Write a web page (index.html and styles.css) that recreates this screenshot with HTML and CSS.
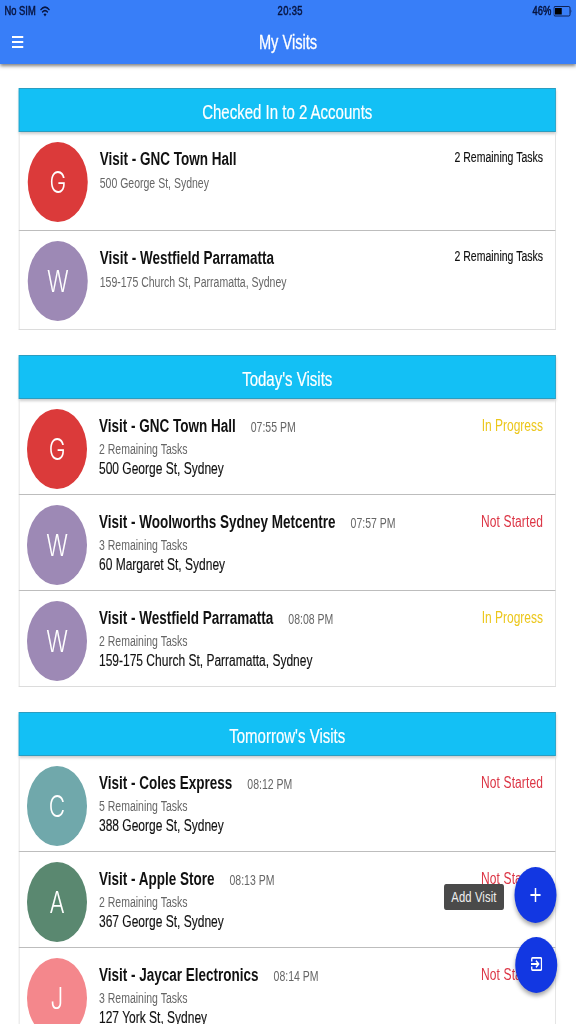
FILE: index.html
```html
<!DOCTYPE html>
<html lang="en">
<head>
    <meta charset="UTF-8">
    <meta name="viewport" content="width=device-width, initial-scale=1.0">
    <title>My Visits</title>
    <link rel="stylesheet" href="styles.css">
</head>
<body>
    <div class="app">
        <header class="top">
            <div class="status-bar">
                <div class="carrier">
                    <span>No SIM</span>
                    <svg width="14" height="11" viewBox="0 0 14 11" fill="none" stroke="#07143f" stroke-width="1.7">
                        <path d="M1 4Q7-1.6 13 4M3.2 6.4Q7 3 10.8 6.4"/>
                        <path d="M7 10.4L5 8.2Q7 6.6 9 8.2Z" fill="#07143f" stroke="none"/>
                    </svg>
                </div>
                <span class="clock">20:35</span>
                <div class="battery">
                    <span>46%</span>
                    <svg width="26" height="11" viewBox="0 0 26 11">
                        <rect x="0.5" y="0.5" width="21.5" height="9.5" rx="1.5" fill="none" stroke="#07143f"/>
                        <rect x="2" y="2" width="9" height="6.5" fill="#000"/>
                        <path d="M23 3.2Q25 5.2 23 7.5Z" fill="#07143f"/>
                    </svg>
                </div>
            </div>
            <div class="nav-bar">
                <button class="menu-button" aria-label="Menu">
                    <span></span>
                    <span></span>
                    <span></span>
                </button>
                <h1>My Visits</h1>
            </div>
        </header>

        <main>
            <!-- Checked in -->
            <section class="card checked-in">
                <h2>Checked In to 2 Accounts</h2>
                <div class="row">
                    <div class="avatar red">G</div>
                    <div class="info">
                        <h3>Visit - GNC Town Hall</h3>
                        <p class="sub">500 George St, Sydney</p>
                    </div>
                    <span class="remaining">2 Remaining Tasks</span>
                </div>
                <div class="row">
                    <div class="avatar purple">W</div>
                    <div class="info">
                        <h3>Visit - Westfield Parramatta</h3>
                        <p class="sub">159-175 Church St, Parramatta, Sydney</p>
                    </div>
                    <span class="remaining">2 Remaining Tasks</span>
                </div>
            </section>

            <!-- Today -->
            <section class="card">
                <h2>Today's Visits</h2>
                <div class="row">
                    <div class="avatar red">G</div>
                    <div class="info">
                        <div class="title"><h3>Visit - GNC Town Hall</h3><span class="time">07:55 PM</span></div>
                        <p class="tasks">2 Remaining Tasks</p>
                        <p class="address">500 George St, Sydney</p>
                    </div>
                    <span class="status in-progress">In Progress</span>
                </div>
                <div class="row">
                    <div class="avatar purple">W</div>
                    <div class="info">
                        <div class="title"><h3>Visit - Woolworths Sydney Metcentre</h3><span class="time">07:57 PM</span></div>
                        <p class="tasks">3 Remaining Tasks</p>
                        <p class="address">60 Margaret St, Sydney</p>
                    </div>
                    <span class="status not-started">Not Started</span>
                </div>
                <div class="row">
                    <div class="avatar purple">W</div>
                    <div class="info">
                        <div class="title"><h3>Visit - Westfield Parramatta</h3><span class="time">08:08 PM</span></div>
                        <p class="tasks">2 Remaining Tasks</p>
                        <p class="address">159-175 Church St, Parramatta, Sydney</p>
                    </div>
                    <span class="status in-progress">In Progress</span>
                </div>
            </section>

            <!-- Tomorrow -->
            <section class="card">
                <h2>Tomorrow's Visits</h2>
                <div class="row">
                    <div class="avatar teal">C</div>
                    <div class="info">
                        <div class="title"><h3>Visit - Coles Express</h3><span class="time">08:12 PM</span></div>
                        <p class="tasks">5 Remaining Tasks</p>
                        <p class="address">388 George St, Sydney</p>
                    </div>
                    <span class="status not-started">Not Started</span>
                </div>
                <div class="row">
                    <div class="avatar green">A</div>
                    <div class="info">
                        <div class="title"><h3>Visit - Apple Store</h3><span class="time">08:13 PM</span></div>
                        <p class="tasks">2 Remaining Tasks</p>
                        <p class="address">367 George St, Sydney</p>
                    </div>
                    <span class="status not-started">Not Started</span>
                </div>
                <div class="row">
                    <div class="avatar pink">J</div>
                    <div class="info">
                        <div class="title"><h3>Visit - Jaycar Electronics</h3><span class="time">08:14 PM</span></div>
                        <p class="tasks">3 Remaining Tasks</p>
                        <p class="address">127 York St, Sydney</p>
                    </div>
                    <span class="status not-started">Not Started</span>
                </div>
            </section>
        </main>

        <div class="fab-menu">
            <div class="fab-item">
                <span class="fab-label">Add Visit</span>
                <button class="fab" aria-label="Add Visit">
                    <svg width="14" height="14" viewBox="0 0 14 14" stroke="#fff" stroke-width="2">
                        <path d="M7 0V14M0 7H14"/>
                    </svg>
                </button>
            </div>
            <div class="fab-item">
                <button class="fab check-in" aria-label="Check in">
                    <svg width="15" height="14" viewBox="0 0 15 14" fill="none" stroke="#fff" stroke-width="1.8">
                        <path d="M1 4.6V1.9Q1 0.9 2 0.9H13Q14 0.9 14 1.9V12.1Q14 13.1 13 13.1H2Q1 13.1 1 12.1V9.4"/>
                        <path d="M0 7H10M6.6 3.6L10.2 7L6.6 10.4"/>
                    </svg>
                </button>
            </div>
        </div>
    </div>
</body>
</html>
```

FILE: styles.css
```css
* {
    box-sizing: border-box;
}

html {
    overflow: hidden;
}

body {
    margin: 0;
    width: 576px;
    height: 1024px;
    overflow: clip;
    background-color: #fff;
    font-family: "Liberation Sans", Arial, sans-serif;
}

/* 768px tablet layout squeezed to the window width */
.app {
    position: relative;
    width: 768px;
    height: 1024px;
    overflow: hidden;
    transform: scaleX(0.75);
    transform-origin: 0 0;
}

h1, h2, h3, p {
    margin: 0;
}

button {
    padding: 0;
    border: none;
    cursor: pointer;
}

.top {
    height: 64px;
    background-color: #387ef8;
    box-shadow: 0 2px 4px rgba(0, 0, 0, 0.5);
}

.status-bar {
    display: grid;
    grid-template-columns: 1fr auto 1fr;
    align-items: center;
    height: 22px;
    padding: 0 4px 0 6px;
    color: #07143f;
    font-size: 12.5px;
    -webkit-text-stroke: 0.5px #07143f;
}

.clock {
    padding-left: 4px;
    letter-spacing: 0.5px;
}

.carrier, .battery {
    display: flex;
    align-items: center;
    gap: 5px;
}

.battery {
    justify-content: flex-end;
    gap: 3px;
}

.nav-bar {
    display: grid;
    grid-template-columns: 1fr auto 1fr;
    align-items: center;
    height: 40px;
    padding: 0 16px;
}

.menu-button {
    display: flex;
    flex-direction: column;
    gap: 3px;
    width: 15px;
    background: none;
}

.menu-button span {
    height: 2px;
    background-color: #fff;
}

h1 {
    color: #fff;
    font-size: 19.5px;
    font-weight: normal;
    -webkit-text-stroke: 0.3px #fff;
}

main {
    display: flex;
    flex-direction: column;
    gap: 25px;
    padding: 24px 27px 0 25px;
}

.card h2 {
    display: flex;
    align-items: center;
    justify-content: center;
    height: 44px;
    padding-top: 4px;
    border: 1px solid #2b9dc0;
    background-color: #13c0f5;
    box-shadow: 0 2px 3px rgba(0, 0, 0, 0.2);
    color: #fff;
    font-size: 20px;
    font-weight: normal;
    -webkit-text-stroke: 0.2px #fff;
}

.row {
    display: flex;
    height: 96px;
    padding: 10px 16px 0 10px;
    border: 1px solid #dcdcdc;
    border-top: none;
    border-bottom-color: #bdbdbd;
}

.row:last-child {
    border-bottom-color: #dcdcdc;
}

.checked-in .row {
    height: 99px;
    padding-left: 11px;
}

.avatar {
    display: flex;
    flex-shrink: 0;
    align-items: center;
    justify-content: center;
    width: 80px;
    height: 80px;
    margin-right: 16px;
    border-radius: 50%;
    color: #fff;
    font-family: Inter, sans-serif;
    font-size: 30px;
    font-weight: 300;
}

.red {
    background-color: #db3a3a;
}

.purple {
    background-color: #9d89b5;
}

.teal {
    background-color: #70a8ab;
}

.green {
    background-color: #5a8870;
}

.pink {
    background-color: #f4878c;
}

.info {
    flex: 1;
    padding-top: 6px;
}

.title {
    display: flex;
    align-items: baseline;
    gap: 20px;
}

h3 {
    color: #111;
    font-size: 18px;
    line-height: 22px;
}

.sub {
    margin-top: 4px;
    color: #666;
    font-size: 14px;
    line-height: 18px;
}

.time {
    color: #666;
    font-size: 14px;
}

.tasks {
    margin-top: 3px;
    color: #666;
    font-size: 14px;
    line-height: 18px;
}

.address {
    margin-top: 1px;
    color: #111;
    font-size: 16px;
    line-height: 20px;
    -webkit-text-stroke: 0.15px #111;
}

.remaining {
    padding-top: 6px;
    color: #111;
    font-size: 14px;
    line-height: 18px;
    -webkit-text-stroke: 0.15px #111;
}

.status {
    padding-top: 7px;
    font-size: 16px;
    line-height: 20px;
}

.in-progress {
    color: #ecc71c;
}

.not-started {
    color: #dc3545;
    letter-spacing: 0.15px;
}

/* floating buttons */
.fab-menu {
    position: absolute;
    right: 25px;
    bottom: 31px;
    display: flex;
    flex-direction: column;
    gap: 14px;
}

.fab-item {
    display: flex;
    align-items: center;
    justify-content: flex-end;
    gap: 14px;
    padding-right: 1px;
}

.fab-item:last-child {
    padding-right: 0;
}

.fab-label {
    padding: 4px 10px;
    margin-top: 4px;
    border-radius: 3px;
    background-color: #4a4a4a;
    color: #eee;
    font-size: 15px;
    line-height: 18px;
    letter-spacing: 0.15px;
}

.fab {
    display: flex;
    align-items: center;
    justify-content: center;
    width: 56px;
    height: 56px;
    border-radius: 50%;
    background-color: #1237e2;
    box-shadow: 0 3px 5px rgba(0, 0, 0, 0.35);
}

.check-in {
    padding-bottom: 2px;
}
```
